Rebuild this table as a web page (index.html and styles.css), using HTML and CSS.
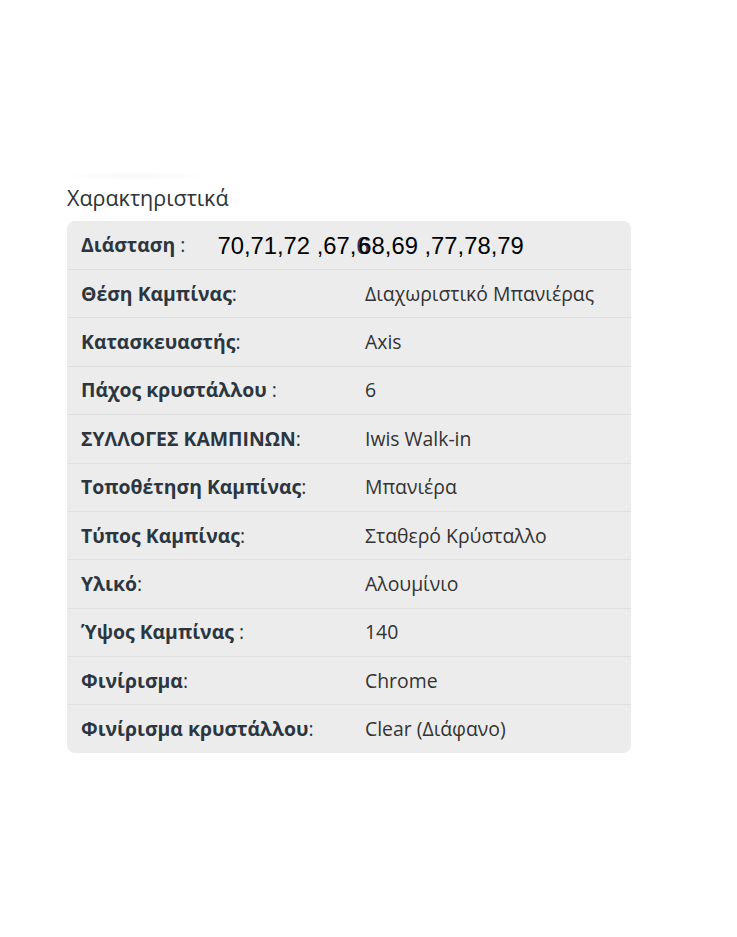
FILE: index.html
```html
<!DOCTYPE html>
<html lang="el">
<head>
<meta charset="utf-8">
<title>Χαρακτηριστικά</title>
<link rel="stylesheet" href="styles.css">
</head>
<body>
<div class="wrap">
  <div class="fade"></div>
  <h3 class="title">Χαρακτηριστικά</h3>
  <div class="specs">
    <div class="row first">
      <span class="label">Διάσταση <span class="colon">:</span></span>
      <span class="dims">70,71,72 ,67,<span class="ghost">6</span>68,69 ,77,78,79</span>
    </div>
    <div class="row"><span class="label">Θέση Καμπίνας<span class="colon">:</span></span><span class="value">Διαχωριστικό Μπανιέρας</span></div>
    <div class="row"><span class="label">Κατασκευαστής<span class="colon">:</span></span><span class="value">Axis</span></div>
    <div class="row"><span class="label">Πάχος κρυστάλλου <span class="colon">:</span></span><span class="value">6</span></div>
    <div class="row"><span class="label">ΣΥΛΛΟΓΕΣ ΚΑΜΠΙΝΩΝ<span class="colon">:</span></span><span class="value">Iwis Walk-in</span></div>
    <div class="row"><span class="label">Τοποθέτηση Καμπίνας<span class="colon">:</span></span><span class="value">Μπανιέρα</span></div>
    <div class="row"><span class="label">Τύπος Καμπίνας<span class="colon">:</span></span><span class="value">Σταθερό Κρύσταλλο</span></div>
    <div class="row"><span class="label">Υλικό<span class="colon">:</span></span><span class="value">Αλουμίνιο</span></div>
    <div class="row"><span class="label">Ύψος Καμπίνας <span class="colon">:</span></span><span class="value">140</span></div>
    <div class="row"><span class="label">Φινίρισμα<span class="colon">:</span></span><span class="value">Chrome</span></div>
    <div class="row"><span class="label">Φινίρισμα κρυστάλλου<span class="colon">:</span></span><span class="value">Clear (Διάφανο)</span></div>
  </div>
</div>
</body>
</html>
```
FILE: styles.css
```css
html, body {
  margin: 0;
  padding: 0;
  background: #ffffff;
}
body {
  font-family: "Open Sans", "Noto Sans", sans-serif;
  color: #333;
}
.wrap {
  width: 564px;
  margin-left: 67px;
  padding-top: 172px;
}
.fade {
  width: 150px;
  height: 8px;
  margin-left: -6px;
  background: radial-gradient(ellipse at center, rgba(0,0,0,0.03), rgba(0,0,0,0) 70%);
}
.title {
  margin: 4px 0 9px 0;
  font-size: 21.5px;
  font-weight: 400;
  line-height: 28px;
  color: #2c3338;
}
.specs {
  background: #ececec;
  border-radius: 8px;
  overflow: hidden;
}
.row {
  display: grid;
  grid-template-columns: 284px 1fr;
  padding: 10.7px 14px;
  font-size: 19.4px;
  line-height: 26px;
  border-top: 1px solid #e0e0e0;
}
.row.first {
  display: flex;
  align-items: center;
  gap: 32px;
  border-top: none;
  padding-top: 10.5px;
  padding-bottom: 10.5px;
}
.label {
  font-weight: 700;
  color: #2b3640;
}
.colon {
  font-weight: 400;
}
.value {
  color: #333;
}
.dims {
  font-family: "Liberation Sans", Arial, sans-serif;
  font-size: 23.8px;
  line-height: 27px;
  color: #000;
}
.ghost {
  display: inline-block;
  width: 2px;
  overflow: visible;
  color: #3a3050;
}
```
